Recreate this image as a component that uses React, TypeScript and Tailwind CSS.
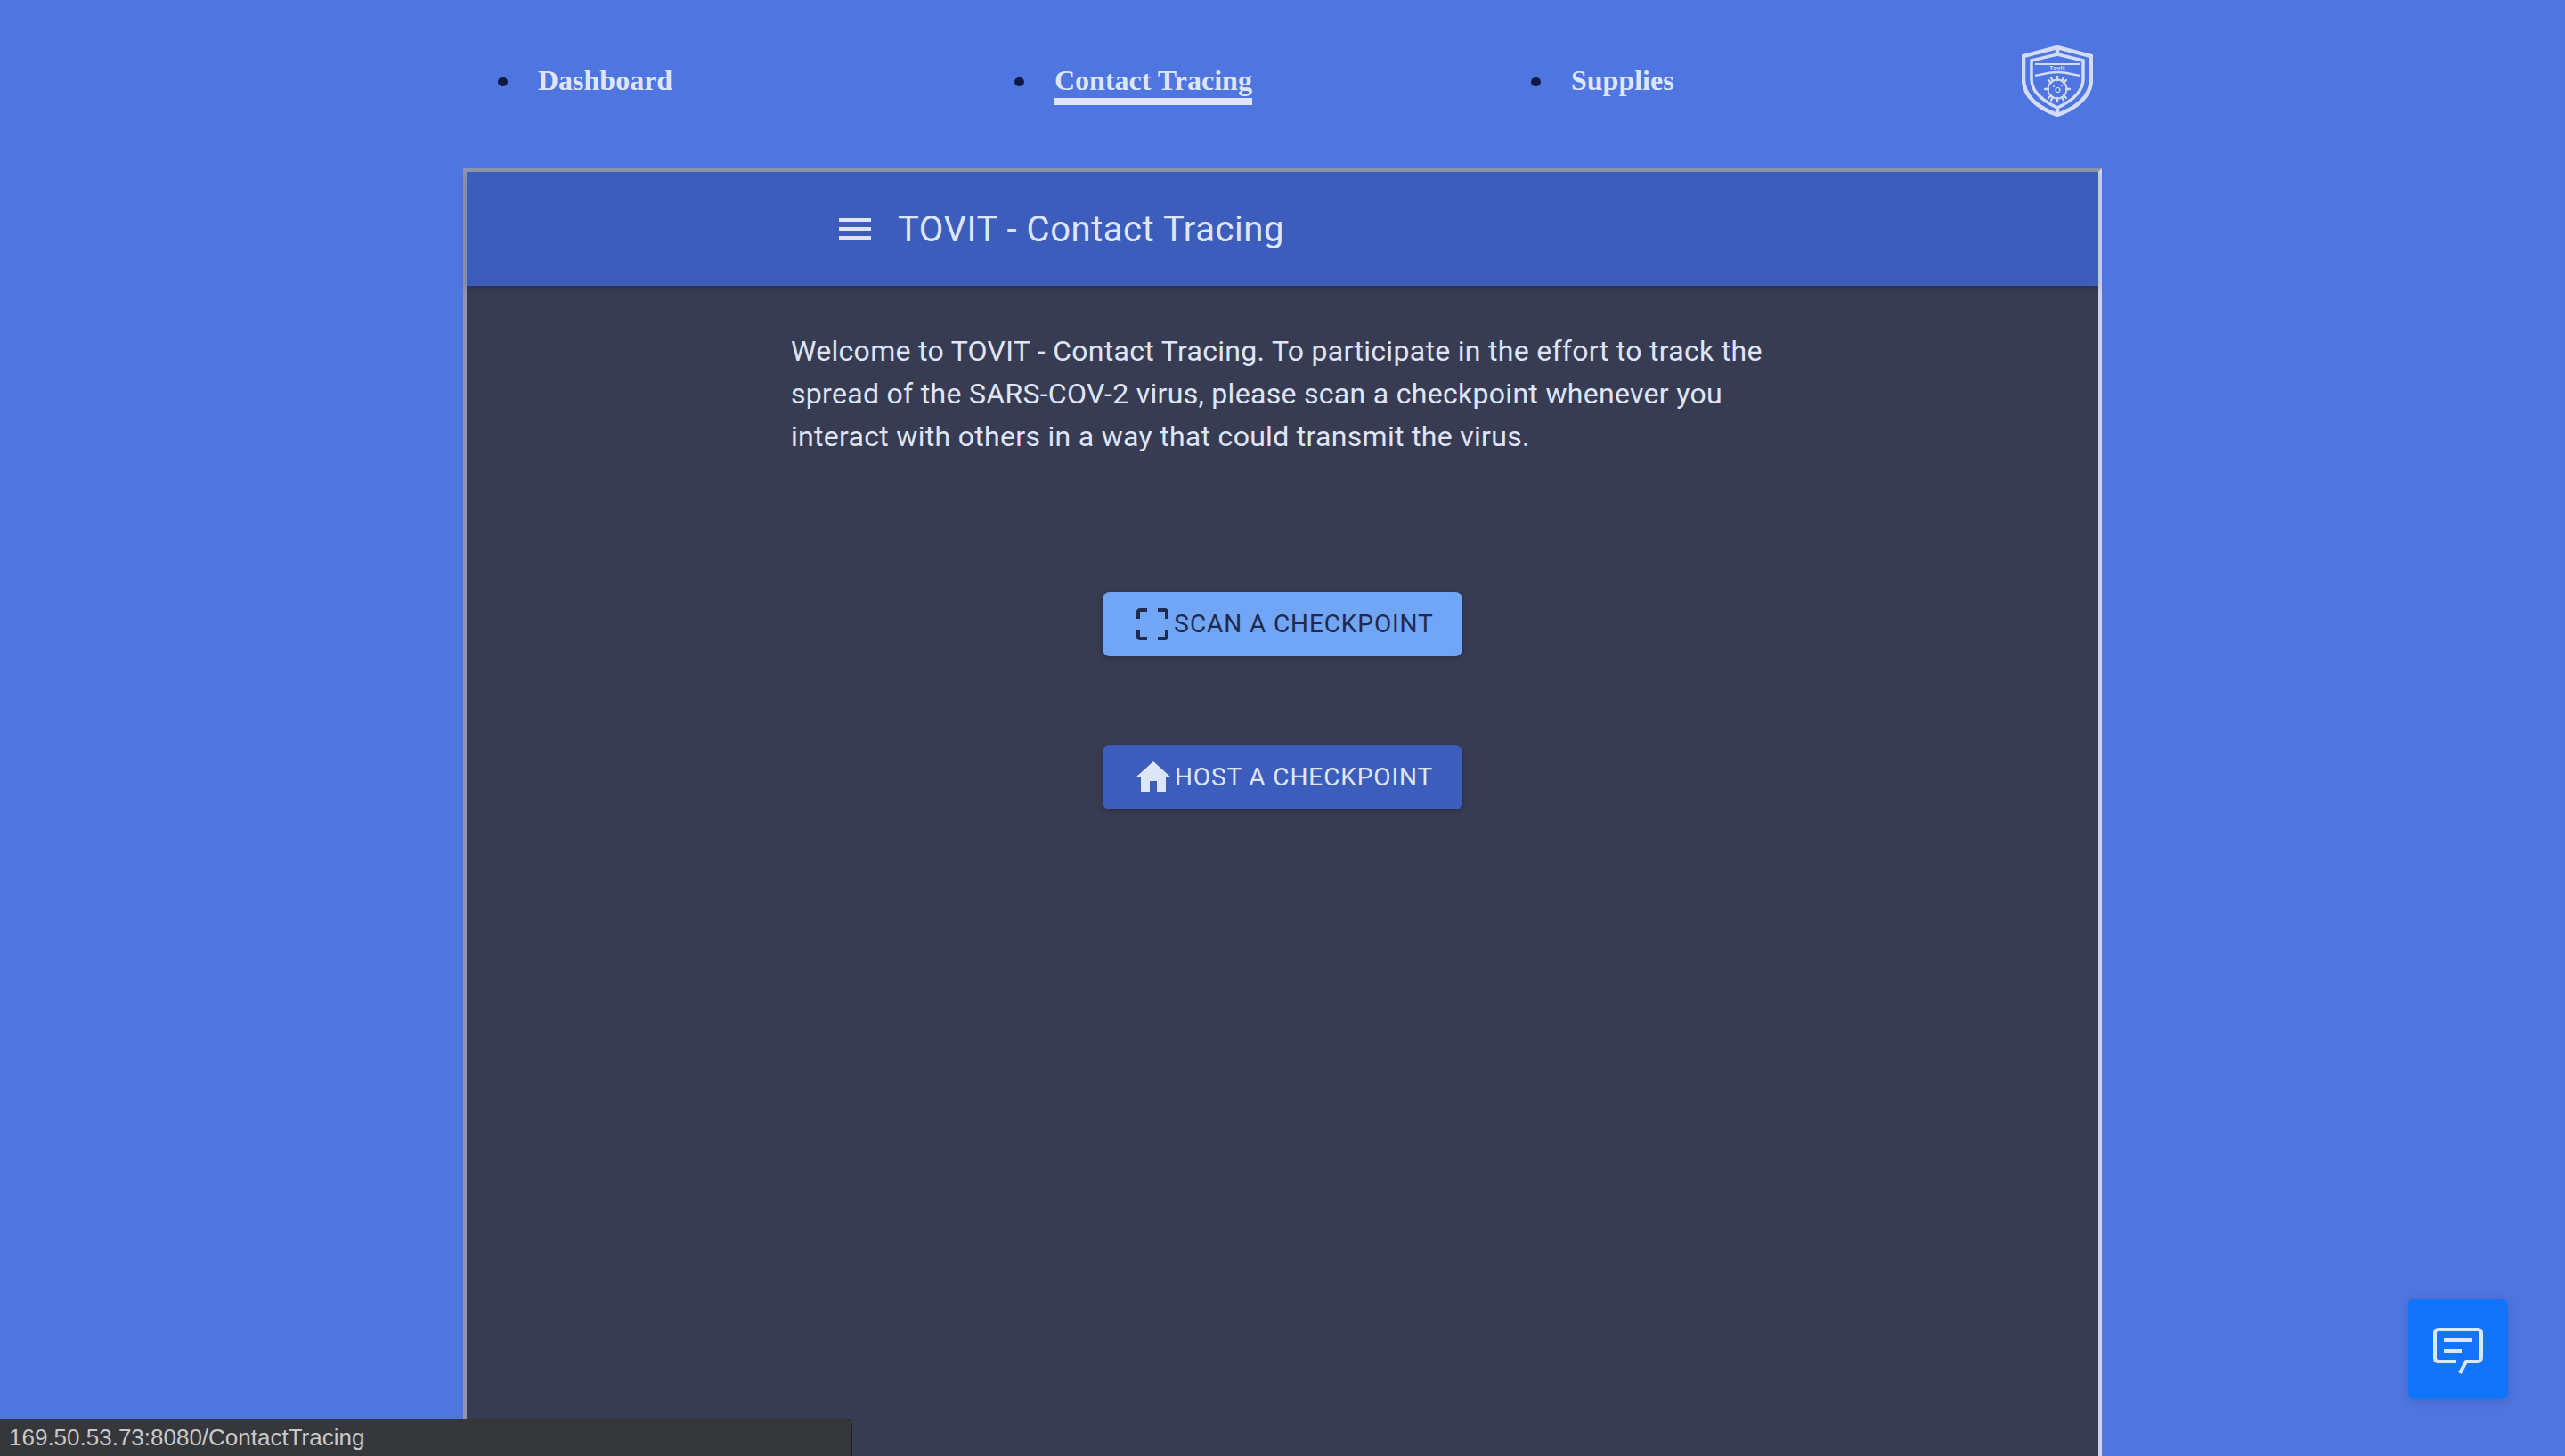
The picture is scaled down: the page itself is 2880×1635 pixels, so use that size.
function ShieldLogo() {
    return (
        <svg width="80" height="80" viewBox="0 0 80 80" fill="none" stroke="#d3dcf4" className="shrink-0">
            <path d="M40 2 L78 12 V38 C78 58 60 71 40 78 C20 71 2 58 2 38 V12 Z" strokeWidth="4.5" />
            <path d="M40 2 V10 M40 70 V78" strokeWidth="4.5" />
            <path d="M40 10 L69 17 V38 C69 52 55 63 40 70 C25 63 11 52 11 38 V17 Z" strokeWidth="3.5" />
            <path d="M15 21 H65" strokeWidth="2" />
            <path d="M15 34 C24 32 32 30 40 30 C48 30 56 32 65 34" strokeWidth="2.5" />
            <text x="40" y="27.5" textAnchor="middle" fontSize="7" fontWeight="700" fill="#d3dcf4" stroke="none" fontFamily="'Open Sans', sans-serif">Tovit</text>
            <circle cx="40" cy="49" r="10.5" strokeWidth="1.8" />
            <circle cx="40.5" cy="50" r="2.5" strokeWidth="1.2" />
            <circle cx="36" cy="46" r="0.8" fill="#d3dcf4" strokeWidth="0.6" />
            <circle cx="45" cy="45" r="0.8" fill="#d3dcf4" strokeWidth="0.6" />
            <path d="M40 39 V35 M40 59 V63 M30 49 H26 M50 49 H54 M33 42 L30 39 M47 42 L50 39 M33 56 L30 59 M47 56 L50 59 M35 40 L33 36.5 M45 40 L47 36.5 M35 58 L33 61.5 M45 58 L47 61.5" strokeWidth="2.4" strokeLinecap="round" />
        </svg>
    );
}

function MenuIcon() {
    return (
        <svg width="48" height="48" viewBox="0 0 24 24" fill="#dfe5f8" className="shrink-0">
            <path d="M3 18h18v-2H3v2zm0-5h18v-2H3v2zm0-7v2h18V6H3z" />
        </svg>
    );
}

function ScanIcon() {
    return (
        <svg width="48" height="48" viewBox="0 0 24 24" fill="#1f2a4d" className="shrink-0">
            <path d="M3 5v4h2V5h4V3H5c-1.1 0-2 .9-2 2zm2 10H3v4c0 1.1.9 2 2 2h4v-2H5v-4zm14 4h-4v2h4c1.1 0 2-.9 2-2v-4h-2v4zm0-16h-4v2h4v4h2V5c0-1.1-.9-2-2-2z" />
        </svg>
    );
}

function HomeIcon() {
    return (
        <svg width="48" height="48" viewBox="0 0 24 24" fill="#dfe5f8" className="shrink-0">
            <path d="M10 20v-6h4v6h5v-8h3L12 3 2 12h3v8z" />
        </svg>
    );
}

function ChatIcon() {
    return (
        <svg width="64" height="64" viewBox="0 0 64 64" fill="none" stroke="#dfe5f8" strokeWidth="4">
            <path d="M30 46 H10 C7 46 6 44 6 42 V14 C6 11 8 10 10 10 H54 C57 10 58 12 58 14 V42 C58 44 56 46 54 46 H41 L34 59" />
            <path d="M16 22 H48 M16 34 H36" />
        </svg>
    );
}

const navItems = ["Dashboard", "Contact Tracing", "Supplies"];

export default function App() {
    return (
        <div className="relative h-screen overflow-hidden bg-[#4f75e0] flex flex-col items-center font-['Roboto',sans-serif]">
            <div className="w-[1840px] h-[189px] flex items-start justify-between shrink-0">
                <ul className="flex pl-[39px] pt-[71px] font-['Liberation_Serif',serif]">
                    {navItems.map((item) => (
                        <li key={item} className="w-[580px] last:w-auto flex items-start text-[32px] leading-[38px] font-bold">
                            <span className="mt-[16px] mr-[34px] w-[11px] h-[10px] rounded-full bg-[#0e1a45]" />
                            <span className={item === "Contact Tracing" ? "inline-block h-[47px] border-b-[8px] border-[#dfe5f8] text-[#dfe5f8]" : "text-[#dfe5f8]"}>
                                {item}
                            </span>
                        </li>
                    ))}
                </ul>
                <div className="pt-[51px] pr-[10px]">
                    <ShieldLogo />
                </div>
            </div>

            <div className="w-[1840px] flex-1 border-l-[4px] border-r-[4px] border-t-[4px] border-l-[#8e96ad] border-t-[#8e96ad] border-r-[#cdd4ea] bg-[#383c52]">
                <div className="h-[128px] bg-[#3c5dbb] flex items-center pl-[412px] shadow-[0_4px_8px_rgba(0,0,0,0.15)]">
                    <MenuIcon />
                    <h1 className="ml-[24px] pt-[2px] text-[40px] font-[450] tracking-[0.55px] text-[#dfe5f8]">TOVIT - Contact Tracing</h1>
                </div>
                <div className="w-[1104px] mx-auto pt-[49px]">
                    <p className="text-[32px] leading-[48px] tracking-[0.3px] text-[#dfe5f8]">
                        Welcome to TOVIT - Contact Tracing. To participate in the effort to track the spread of the SARS-COV-2 virus, please scan a checkpoint whenever you interact with others in a way that could transmit the virus.
                    </p>
                    <div className="mt-[151px] flex flex-col items-center gap-[100px]">
                        <button className="w-[404px] h-[72px] rounded-[8px] bg-[#71a5f6] text-[#1f2a4d] flex items-center justify-center text-[28px] font-[450] tracking-[0.9px] shadow-[0_2px_6px_rgba(0,0,0,0.25)]">
                            <ScanIcon />
                            SCAN A CHECKPOINT
                        </button>
                        <button className="w-[404px] h-[72px] rounded-[8px] bg-[#3c5dbb] text-[#dfe5f8] flex items-center justify-center text-[28px] font-[450] tracking-[0.9px] shadow-[0_2px_6px_rgba(0,0,0,0.25)]">
                            <HomeIcon />
                            HOST A CHECKPOINT
                        </button>
                    </div>
                </div>
            </div>

            <div className="absolute right-[64px] bottom-[64px] w-[112px] h-[112px] rounded-[6px] bg-[#1273fb] flex items-center justify-center shadow-[0_2px_12px_rgba(0,0,0,0.15)]">
                <ChatIcon />
            </div>

            <div className="absolute left-0 bottom-0 w-[957px] h-[42px] bg-[#36373a] border-t border-r border-[#23242a] rounded-tr-[8px] pl-[10px] flex items-center text-[26px] text-[#c8c9cc] font-['Liberation_Sans',sans-serif]">
                169.50.53.73:8080/ContactTracing
            </div>
        </div>
    );
}
